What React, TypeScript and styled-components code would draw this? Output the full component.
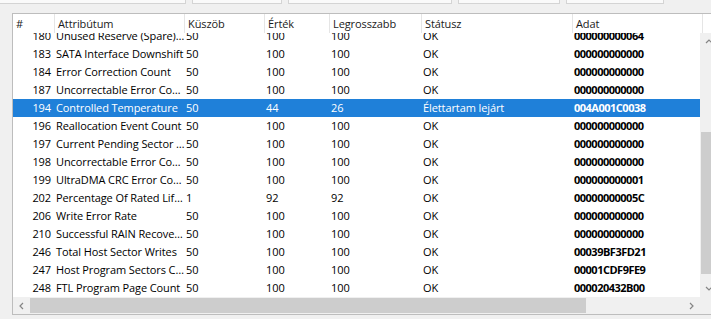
import styled, { createGlobalStyle } from 'styled-components';

/* Data */
const COLUMNS = [
    { title: '#',           width: 42 },
    { title: 'Attribútum',  width: 130 },
    { title: 'Küszöb',      width: 80 },
    { title: 'Érték',       width: 65 },
    { title: 'Legrosszabb', width: 92 },
    { title: 'Státusz',     width: 151 },
    { title: 'Adat',        width: 130 },
];

const ROWS: Row[] = [
    { id: 180, name: 'Unused Reserve (Spare) Blocks', limit: '50', value: '100', worst: '100', status: 'OK', raw: '000000000064' },
    { id: 183, name: 'SATA Interface Downshift', limit: '50', value: '100', worst: '100', status: 'OK', raw: '000000000000' },
    { id: 184, name: 'Error Correction Count', limit: '50', value: '100', worst: '100', status: 'OK', raw: '000000000000' },
    { id: 187, name: 'Uncorrectable Error Count', limit: '50', value: '100', worst: '100', status: 'OK', raw: '000000000000' },
    { id: 194, name: 'Controlled Temperature', limit: '50', value: '44', worst: '26', status: 'Élettartam lejárt', raw: '004A001C0038', selected: true },
    { id: 196, name: 'Reallocation Event Count', limit: '50', value: '100', worst: '100', status: 'OK', raw: '000000000000' },
    { id: 197, name: 'Current Pending Sector Count', limit: '50', value: '100', worst: '100', status: 'OK', raw: '000000000000' },
    { id: 198, name: 'Uncorrectable Error Count', limit: '50', value: '100', worst: '100', status: 'OK', raw: '000000000000' },
    { id: 199, name: 'UltraDMA CRC Error Count', limit: '50', value: '100', worst: '100', status: 'OK', raw: '000000000001' },
    { id: 202, name: 'Percentage Of Rated Lifetime Used', limit: '1', value: '92', worst: '92', status: 'OK', raw: '00000000005C' },
    { id: 206, name: 'Write Error Rate', limit: '50', value: '100', worst: '100', status: 'OK', raw: '000000000000' },
    { id: 210, name: 'Successful RAIN Recovery Count', limit: '50', value: '100', worst: '100', status: 'OK', raw: '000000000000' },
    { id: 246, name: 'Total Host Sector Writes', limit: '50', value: '100', worst: '100', status: 'OK', raw: '00039BF3FD21' },
    { id: 247, name: 'Host Program Sectors Count', limit: '50', value: '100', worst: '100', status: 'OK', raw: '00001CDF9FE9' },
    { id: 248, name: 'FTL Program Page Count', limit: '50', value: '100', worst: '100', status: 'OK', raw: '000020432B00' },
];

const FIELDS = [ 185, 88, 162, 100, 96 ];

const Chevron = ({ dir }: { dir: 'up' | 'down' | 'left' | 'right' }) => {
    const paths = {
        up:    'M1 5 L4 2 L7 5',
        down:  'M1 2 L4 5 L7 2',
        left:  'M5 1 L2 4 L5 7',
        right: 'M2 1 L5 4 L2 7',
    };

    return (
        <svg width = { 8 } height = { 8 } viewBox = '0 0 8 8'>
            <path d = { paths[dir] } fill = 'none' stroke = '#858585' strokeWidth = { 1.2 } />
        </svg>
    );
};

export default function App() {
    return (
        <>
            <GlobalStyle />
            <Page>
                <FieldStrip>
                    { FIELDS.map((w, i) => <Field key = { i } $width = { w } />) }
                </FieldStrip>

                <ListFrame>
                    <HeaderRow>
                        { COLUMNS.map(col => (
                            <HeaderCell key = { col.title } $width = { col.width }>{ col.title }</HeaderCell>
                        )) }
                        <HeaderFill />
                    </HeaderRow>

                    <BodyArea>
                        <Rows>
                            <RowsInner>
                                { ROWS.map(row => (
                                    <RowLine key = { row.id } $selected = { row.selected }>
                                        <NumCell $width = { COLUMNS[0].width }>{ row.id }</NumCell>
                                        <Cell $width = { COLUMNS[1].width }>{ row.name }</Cell>
                                        <Cell $width = { COLUMNS[2].width }>{ row.limit }</Cell>
                                        <Cell $width = { COLUMNS[3].width }>{ row.value }</Cell>
                                        <Cell $width = { COLUMNS[4].width }>{ row.worst }</Cell>
                                        <Cell $width = { COLUMNS[5].width }>{ row.status }</Cell>
                                        <RawCell $width = { COLUMNS[6].width }>{ row.raw }</RawCell>
                                    </RowLine>
                                )) }
                            </RowsInner>
                        </Rows>

                        <VScroll>
                            <ArrowBox $h = { 17 }><Chevron dir = 'up' /></ArrowBox>
                            <VTrack>
                                <VThumb />
                            </VTrack>
                            <ArrowBox $h = { 17 }><Chevron dir = 'down' /></ArrowBox>
                        </VScroll>
                    </BodyArea>

                    <HScrollRow>
                        <HScroll>
                            <ArrowBox $w = { 17 }><Chevron dir = 'left' /></ArrowBox>
                            <HTrack>
                                <HThumb />
                            </HTrack>
                            <ArrowBox $w = { 17 }><Chevron dir = 'right' /></ArrowBox>
                        </HScroll>
                        <Corner />
                    </HScrollRow>
                </ListFrame>
            </Page>
        </>
    );
}

/* Styles */
const GlobalStyle = createGlobalStyle`
    html, body {
        margin: 0;
        padding: 0;
        background: #f0f0f0;
    }
    body {
        font-family: 'Open Sans', 'Noto Sans', sans-serif;
        font-size: 11px;
        color: #000;
    }
`;

const Page = styled.div`
    width: 711px;
    height: 319px;
    overflow: hidden;
    background: #f0f0f0;
`;

const FieldStrip = styled.div`
    display: flex;
    gap: 6px;
    height: 4px;
    margin-left: -1px;
`;

const Field = styled.div<{ $width: number }>`
    flex: 0 0 ${p => p.$width}px;
    height: 3px;
    background: #fafafa;
    border: 1px solid #d4d4d4;
    border-top: none;
`;

const ListFrame = styled.div`
    margin: 9px 0 0 12px;
    width: 720px;
    height: 300px;
    border: 1px solid #bdbdbd;
    background: #fff;
    display: flex;
    flex-direction: column;
`;

const HeaderRow = styled.div`
    display: flex;
    flex: 0 0 19px;
    background: #fff;
    position: relative;
    z-index: 1;
`;

const HeaderCell = styled.div<{ $width: number }>`
    flex: 0 0 ${p => p.$width}px;
    box-sizing: border-box;
    padding: 2px 0 0 3px;
    border-right: 1px solid #e5e5e5;
    line-height: 16px;
    white-space: nowrap;
    overflow: hidden;
    color: #1a1a1a;
    letter-spacing: -0.1px;
`;

const HeaderFill = styled.div`
    flex: 1;
`;

const BodyArea = styled.div`
    flex: 1;
    display: flex;
    min-height: 0;
`;

const Rows = styled.div`
    flex: 0 0 687px;
    overflow: hidden;
`;

const RowsInner = styled.div`
    margin-top: -6px;
`;

const RowLine = styled.div<{ $selected?: boolean }>`
    display: flex;
    height: 18px;
    line-height: 18px;
    background: ${p => (p.$selected ? '#1f80d9' : 'transparent')};
    color: ${p => (p.$selected ? '#fff' : '#000')};
`;

const Cell = styled.div<{ $width: number }>`
    flex: 0 0 ${p => p.$width}px;
    box-sizing: border-box;
    padding-left: 1px;
    white-space: nowrap;
    overflow: hidden;
    text-overflow: ellipsis;
    letter-spacing: -0.1px;
`;

const NumCell = styled(Cell)`
    text-align: right;
    padding: 0 4px 0 0;
`;

const RawCell = styled(Cell)`
    font-weight: 700;
    letter-spacing: -0.5px;
    text-overflow: clip;
`;

const VScroll = styled.div`
    flex: 0 0 17px;
    display: flex;
    flex-direction: column;
    background: #f0f0f0;
`;

const ArrowBox = styled.div<{ $w?: number; $h?: number }>`
    flex: 0 0 ${p => p.$w ?? p.$h}px;
    display: flex;
    align-items: center;
    justify-content: center;
`;

const VTrack = styled.div`
    flex: 1;
    display: flex;
    flex-direction: column;
    padding: 82px 1px 6px;
`;

const VThumb = styled.div`
    flex: 1;
    background: #cdcdcd;
`;

const HScrollRow = styled.div`
    display: flex;
    flex: 0 0 17px;
`;

const HScroll = styled.div`
    flex: 0 0 687px;
    display: flex;
    background: #f0f0f0;
`;

const HTrack = styled.div`
    flex: 1;
    display: flex;
    padding: 1px 97px 1px 0;
`;

const HThumb = styled.div`
    flex: 1;
    background: #cdcdcd;
`;

const Corner = styled.div`
    flex: 1;
    background: #f0f0f0;
`;

/* Types */
interface Row {
    id: number;
    name: string;
    limit: string;
    value: string;
    worst: string;
    status: string;
    raw: string;
    selected?: boolean;
}
